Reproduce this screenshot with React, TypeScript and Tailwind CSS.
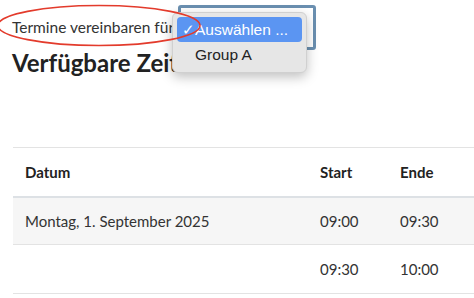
import React from "react";

const font = { fontFamily: "Lato, 'Noto Sans', sans-serif" };

export default function App() {
  return (
    <div
      className="relative w-[474px] h-[298px] overflow-hidden bg-white text-[#222]"
      style={font}
    >
      <div className="pl-[12px] pt-[5px]">
        {/* label + select */}
        <div className="flex items-center gap-[4px] h-[45px]">
          <span className="text-[15.5px] text-[#333] leading-none">Termine vereinbaren für</span>
          <div className="w-[138px] h-[45px] border-[3px] border-[#6a8fb0] rounded-[3px] bg-white" />
        </div>

        <h1 className="text-[24px] font-bold leading-none text-[#222] mt-[1px] whitespace-nowrap">
          Verfügbare Zeiten
        </h1>

        <table className="ml-[1px] mt-[72px] w-[560px] border-collapse text-[15px]">
          <thead>
            <tr className="border-t border-[#e3e3e3] border-b-2 border-b-[#dde1e5]">
              <th className="h-[49px] w-[295px] pl-[12px] text-left font-bold">Datum</th>
              <th className="w-[80px] pl-[12px] text-left font-bold">Start</th>
              <th className="w-[80px] pl-[12px] text-left font-bold">Ende</th>
              <th />
            </tr>
          </thead>
          <tbody>
            <tr className="bg-[#f6f6f6] border-b border-[#e3e3e3]">
              <td className="h-[48px] pl-[12px] text-[#333]">Montag, 1. September 2025</td>
              <td className="pl-[12px] text-[#333]">09:00</td>
              <td className="pl-[12px] text-[#333]">09:30</td>
              <td />
            </tr>
            <tr className="border-b border-[#e3e3e3]">
              <td className="h-[49px] pl-[12px]" />
              <td className="pl-[12px] text-[#333]">09:30</td>
              <td className="pl-[12px] text-[#333]">10:00</td>
              <td />
            </tr>
          </tbody>
        </table>
      </div>

      {/* open native dropdown menu */}
      <div
        className="absolute left-[172px] top-[12px] w-[135px] h-[61px] rounded-[6px] bg-[#e6e6e6] border border-[#d0d0d0] shadow-[0_4px_12px_rgba(0,0,0,0.25)] p-[4px]"
        style={{ fontFamily: "'Liberation Sans', Arial, sans-serif" }}
      >
        <div className="flex items-center h-[25px] rounded-[4px] bg-[#5b95f2] text-white text-[15.5px] pl-[5px]">
          <span className="text-[15px] w-[13px] leading-none">✓</span>
          <span>Auswählen ...</span>
        </div>
        <div className="flex items-center h-[26px] pl-[18px] text-[15.5px] text-[#222]">Group A</div>
      </div>

      {/* red annotation ellipse */}
      <svg className="absolute left-0 top-0" width="220" height="60">
        <ellipse cx="99" cy="25.5" rx="101" ry="20" fill="none" stroke="#e33b2c" strokeWidth="1.6" />
      </svg>
    </div>
  );
}
